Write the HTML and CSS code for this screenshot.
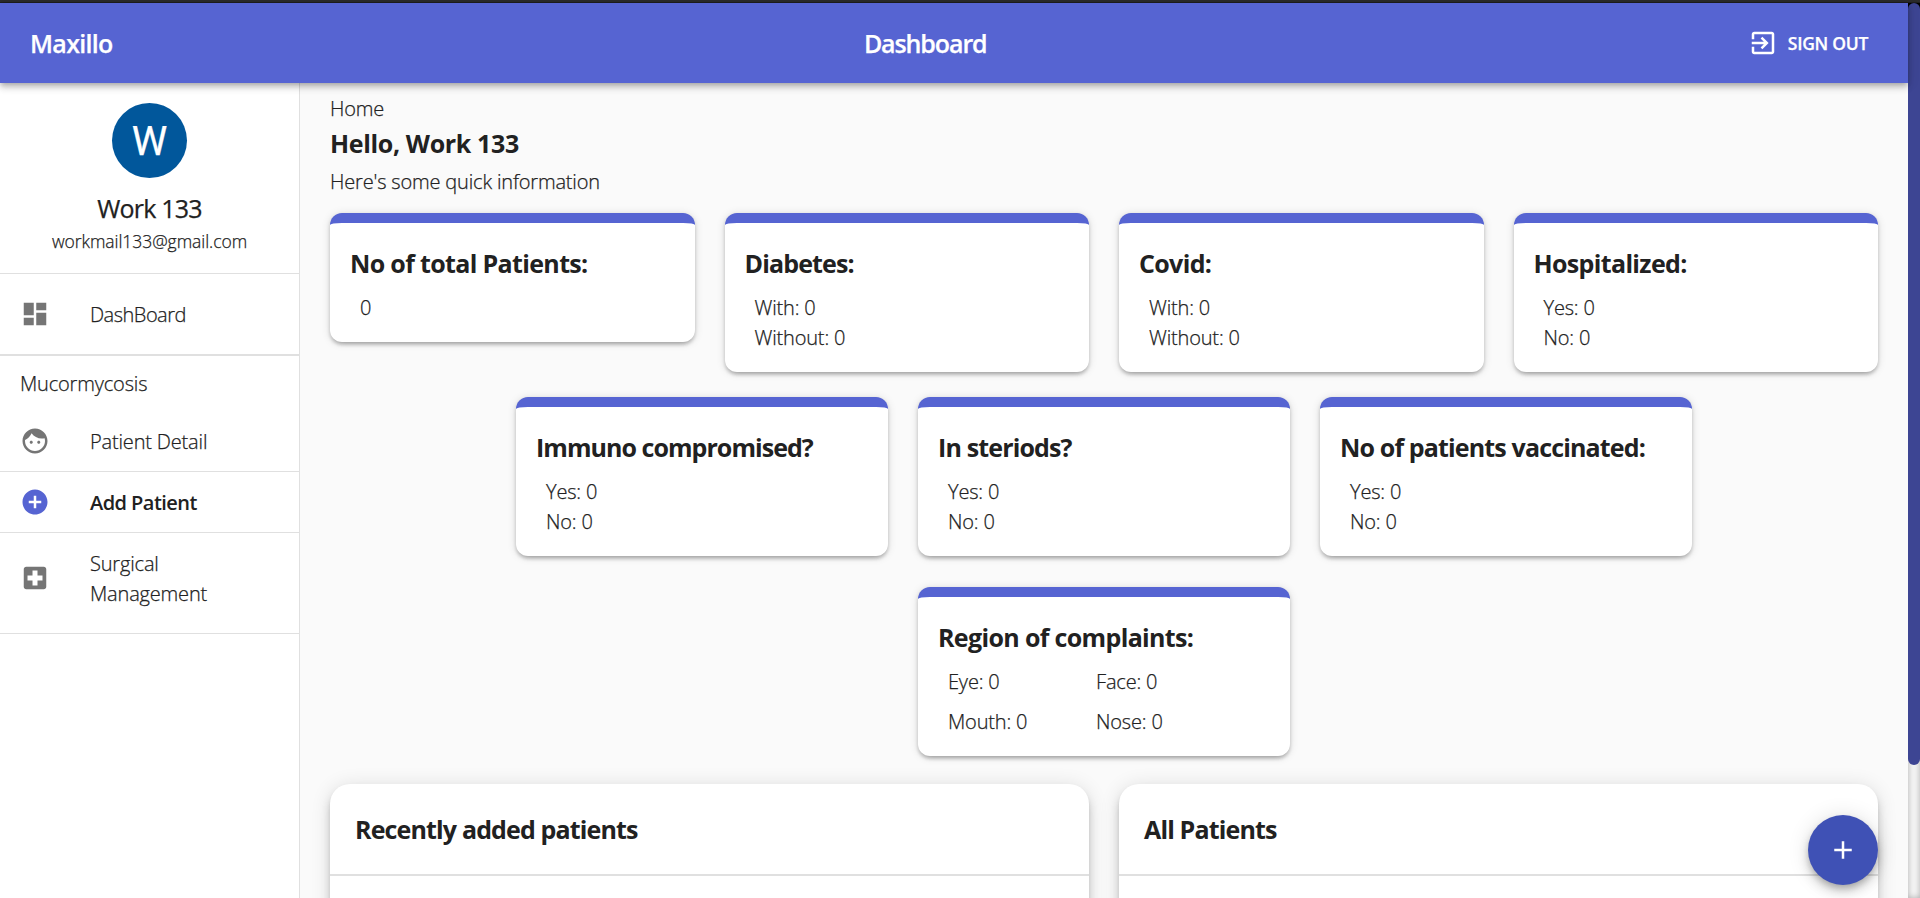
FILE: index.html
```html
<!DOCTYPE html>
<html lang="en">
<head>
<meta charset="utf-8">
<title>Dashboard - Maxillo</title>
<link rel="stylesheet" href="styles.css">
</head>
<body>
<div class="window-edge"></div>
<div class="app">
  <div class="page">
    <header class="appbar">
      <div class="brand">Maxillo</div>
      <h1 class="heading">Dashboard</h1>
      <div class="signout">
        <svg class="icon" viewBox="0 0 24 24"><path d="M10.09 15.59 11.5 17l5-5-5-5-1.41 1.41L12.67 11H3v2h9.67l-2.58 2.59zM19 3H5c-1.11 0-2 .9-2 2v4h2V5h14v14H5v-4H3v4c0 1.1.89 2 2 2h14c1.1 0 2-.9 2-2V5c0-1.1-.9-2-2-2z"/></svg>
        <span class="signout-text">SIGN OUT</span>
      </div>
    </header>
    <div class="body">
      <nav class="sidebar">
        <div class="profile">
          <div class="avatar">W</div>
          <div class="name">Work 133</div>
          <div class="email">workmail133@gmail.com</div>
        </div>
        <a class="item item-home">
          <svg class="icon" viewBox="0 0 24 24"><path d="M3 13h8V3H3v10zm0 8h8v-6H3v6zm10 0h8V11h-8v10zm0-18v6h8V3h-8z"/></svg>
          <span class="label">DashBoard</span>
        </a>
        <div class="section">Mucormycosis</div>
        <a class="item">
          <svg class="icon" viewBox="0 0 24 24"><path d="M9 11.75c-.69 0-1.25.56-1.25 1.25s.56 1.25 1.25 1.25 1.25-.56 1.25-1.25-.56-1.25-1.25-1.25zm6 0c-.69 0-1.25.56-1.25 1.25s.56 1.25 1.25 1.25 1.25-.56 1.25-1.25-.56-1.25-1.25-1.25zM12 2C6.48 2 2 6.48 2 12s4.48 10 10 10 10-4.48 10-10S17.52 2 12 2zm0 18c-4.41 0-8-3.59-8-8 0-.29.02-.58.05-.86 2.36-1.05 4.23-2.98 5.21-5.37C11.07 8.33 14.05 10 17.42 10c.78 0 1.53-.09 2.25-.26.21.71.33 1.47.33 2.26 0 4.41-3.59 8-8 8z"/></svg>
          <span class="label">Patient Detail</span>
        </a>
        <a class="item item-active">
          <svg class="icon" viewBox="0 0 24 24"><path d="M12 2C6.48 2 2 6.48 2 12s4.48 10 10 10 10-4.48 10-10S17.52 2 12 2zm5 11h-4v4h-2v-4H7v-2h4V7h2v4h4v2z"/></svg>
          <span class="label">Add Patient</span>
        </a>
        <a class="item item-tall">
          <svg class="icon" viewBox="0 0 24 24"><path d="M19 3H5c-1.1 0-1.99.9-1.99 2L3 19c0 1.1.9 2 2 2h14c1.1 0 2-.9 2-2V5c0-1.1-.9-2-2-2zm-1 11h-4v4h-4v-4H6v-4h4V6h4v4h4v4z"/></svg>
          <span class="label">Surgical<br>Management</span>
        </a>
      </nav>
      <main class="main">
        <div class="crumb">Home</div>
        <h2 class="hello">Hello, Work 133</h2>
        <p class="intro">Here's some quick information</p>
        <section class="row row-four">
          <article class="card"><h3 class="loose">No of total Patients:</h3><p>0</p></article>
          <article class="card"><h3>Diabetes:</h3><p>With: 0</p><p>Without: 0</p></article>
          <article class="card"><h3 class="loose">Covid:</h3><p>With: 0</p><p>Without: 0</p></article>
          <article class="card"><h3 class="loose">Hospitalized:</h3><p>Yes: 0</p><p>No: 0</p></article>
        </section>
        <section class="row row-three">
          <article class="card"><h3 class="tight">Immuno compromised?</h3><p>Yes: 0</p><p>No: 0</p></article>
          <article class="card"><h3>In steriods?</h3><p>Yes: 0</p><p>No: 0</p></article>
          <article class="card"><h3>No of patients vaccinated:</h3><p>Yes: 0</p><p>No: 0</p></article>
        </section>
        <section class="row row-one">
          <article class="card">
            <h3 class="loose">Region of complaints:</h3>
            <div class="regions"><p>Eye: 0</p><p>Face: 0</p><p>Mouth: 0</p><p>Nose: 0</p></div>
          </article>
        </section>
        <section class="row row-lists">
          <article class="list"><h3>Recently added patients</h3></article>
          <article class="list"><h3>All Patients</h3></article>
        </section>
      </main>
    </div>
  </div>
  <div class="scrollbar"><div class="thumb"></div></div>
</div>
<button class="fab" aria-label="Add"><svg class="icon" viewBox="0 0 24 24"><path d="M19 13h-6v6h-2v-6H5v-2h6V5h2v6h6v2z"/></svg></button>
</body>
</html>
```
FILE: styles.css
```css
* { box-sizing: border-box; }

body {
  margin: 0;
  height: 898px;
  overflow: hidden;
  display: flex;
  flex-direction: column;
  background: #fafafa;
  color: #212121;
  font-family: "Segoe UI", "Open Sans", "Noto Sans", sans-serif;
  font-size: 20px;
  font-weight: 300;
  line-height: 30px;
  letter-spacing: -.17px;
  white-space: nowrap;
  -webkit-text-stroke: .25px currentColor;
}

h1, h2, h3, p { margin: 0; }

h2, h3 { -webkit-text-stroke: 0; }

.icon { width: 30px; height: 30px; fill: currentColor; flex: none; display: block; }

.window-edge { height: 3px; flex: none; background: #2b2b2b; border-bottom: 1px solid #1f1f1f; }

.app { flex: 1; min-height: 0; display: flex; }
.page { flex: 1; min-width: 0; min-height: 0; display: flex; flex-direction: column; }

.appbar {
  height: 80px;
  flex: none;
  display: flex;
  justify-content: space-between;
  align-items: center;
  padding: 0 40px 0 30px;
  background: #5664d2;
  color: #fff;
  position: relative;
  z-index: 2;
  box-shadow: 0 2px 5px -1px rgba(0,0,0,.2), 0 5px 6px rgba(0,0,0,.14), 0 1px 12px rgba(0,0,0,.12);
}
.brand, .heading { font-size: 25px; font-weight: 600; line-height: 40px; }
.brand { letter-spacing: -.7px; }
.heading { letter-spacing: -1.1px; }
.signout { padding-left: 10px; display: flex; align-items: center; gap: 10px; font-size: 17.5px; font-weight: 600; }
.signout-text { letter-spacing: -.3px; }

.body { flex: 1; min-height: 0; display: flex; overflow: hidden; }

.sidebar { width: 300px; flex: none; background: #fff; border-right: 1px solid #e0e0e0; }
.profile {
  height: 191px;
  padding-top: 20px;
  display: flex;
  flex-direction: column;
  align-items: center;
  border-bottom: 1px solid #e0e0e0;
}
.avatar {
  width: 75px;
  height: 75px;
  border-radius: 50%;
  background: #01579b;
  color: #fff;
  font: 400 40px/77px Roboto, sans-serif;
  letter-spacing: 0;
  text-align: center;
}
.name { margin-top: 10px; margin-bottom: 1px; font-size: 25px; font-weight: 500; line-height: 40px; letter-spacing: -.8px; }
.email { font-size: 17.5px; line-height: 25px; letter-spacing: -.05px; }

.item {
  height: 61px;
  padding-left: 20px;
  display: flex;
  align-items: center;
  gap: 40px;
  border-bottom: 1px solid #e0e0e0;
  color: #212121;
}
.item .icon { color: #757575; }
.label { padding-top: 2px; }
.item-home { height: 82px; border-bottom-width: 2px; letter-spacing: -.5px; }
.item-active { font-weight: 600; letter-spacing: -.55px; -webkit-text-stroke: 0; }
.item-active .icon { color: #5664d2; }
.item-tall { height: 101px; padding-bottom: 10px; }
.section { height: 55px; padding: 13px 20px; }

.main { flex: 1; min-width: 0; padding: 11px 30px 0; }
.hello { font-size: 25px; font-weight: 700; line-height: 38px; letter-spacing: -.35px; }
.intro { margin-top: 5px; }

.row { display: grid; gap: 30px; align-items: start; }
.row-four { grid-template-columns: repeat(4, 1fr); margin-top: 16px; }
.row-three { grid-template-columns: repeat(3, 372px); justify-content: center; margin-top: 25px; }
.row-one { grid-template-columns: 372px; justify-content: center; margin-top: 31px; }
.row-lists { grid-template-columns: 1fr 1fr; margin-top: 28px; }

.card {
  padding: 20px 20px 19px;
  border-top: 10px solid #5664d2;
  border-radius: 12px;
  background: #fff;
  box-shadow: 0 4px 4px -2px rgba(0,0,0,.2), 0 2px 4px rgba(0,0,0,.14), 0 1px 10px rgba(0,0,0,.12);
}
.card h3, .list h3 { font-size: 25px; font-weight: 700; line-height: 40px; letter-spacing: -.85px; }
.card h3 { margin-bottom: 10px; }
.card .loose { letter-spacing: -.65px; }
.card .tight { letter-spacing: -.95px; }
.card p { padding-left: 10px; }
.regions { display: grid; grid-template-columns: 148px 1fr; row-gap: 10px; }

.list {
  height: 150px;
  border-radius: 20px 20px 0 0;
  background: #fff;
  box-shadow: 0 4px 5px -2px rgba(0,0,0,.2), 0 7px 10px rgba(0,0,0,.14), 0 2px 20px rgba(0,0,0,.12);
}
.list h3 { height: 92px; padding: 25px; border-bottom: 2px solid #e0e0e0; }

.scrollbar {
  width: 12px;
  background: linear-gradient(#000 0 6px, #f5f5f5 6px);
  box-shadow: inset 0 0 6px rgba(0,0,0,.3);
}
.thumb { height: 762px; border-radius: 6px; background: #3d4593; }

.fab {
  position: absolute;
  right: 42px;
  bottom: 13px;
  width: 70px;
  height: 70px;
  padding: 20px;
  border: 0;
  border-radius: 50%;
  background: #3f51b5;
  color: #fff;
  z-index: 3;
  box-shadow: 0 4px 6px -1px rgba(0,0,0,.2), 0 7px 12px rgba(0,0,0,.14), 0 1px 22px rgba(0,0,0,.12);
}
```
